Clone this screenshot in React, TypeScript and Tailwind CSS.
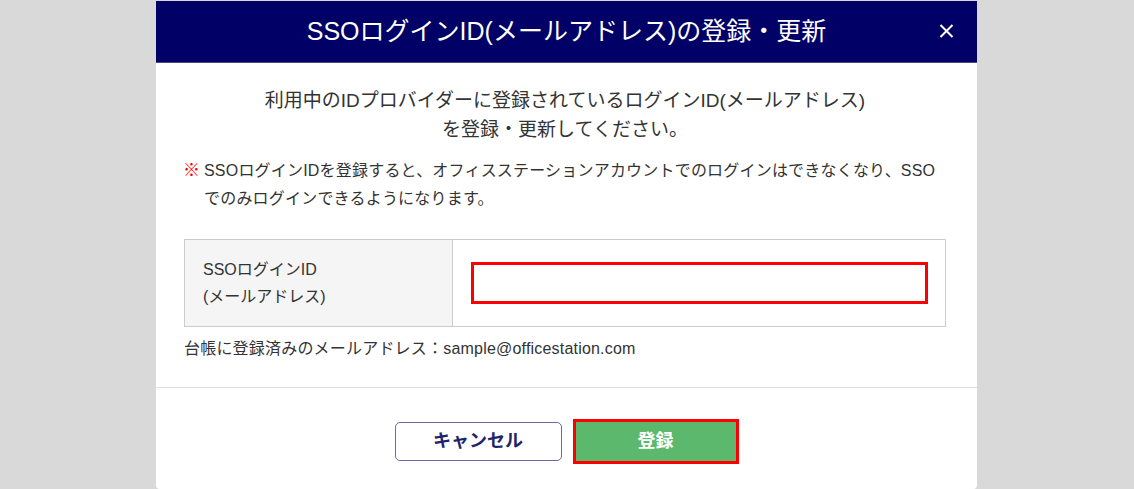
export default function App() {
  return (
    <div className="w-full h-[489px] bg-[#d9d9d9] pt-[1px] pl-[156px] flex overflow-hidden font-['Liberation_Sans','Noto_Sans_CJK_JP',sans-serif]">
      <div className="w-[821px] h-[488px] bg-white rounded-b-[4px] flex flex-col">
        {/* Header */}
        <div className="relative h-[62px] bg-[#000066] border-b border-[#4a4a8a] flex items-center justify-center">
          <h1 className="text-white text-[25px] leading-none">SSOログインID(メールアドレス)の登録・更新</h1>
          <button className="absolute right-[23px] top-[23px] text-white">
            <svg width="15" height="14" viewBox="0 0 15 14" fill="none" stroke="currentColor" strokeWidth="2">
              <path d="M1.5 1 L13.5 13 M13.5 1 L1.5 13" />
            </svg>
          </button>
        </div>

        {/* Body */}
        <div className="pl-[28px] pr-[31px] pt-[23px] pb-[26px] text-[#333]">
          <p className="text-center text-[19px] leading-[29px]">
            利用中のIDプロバイダーに登録されているログインID(メールアドレス)
            <br />
            を登録・更新してください。
          </p>

          <div className="mt-[13px] flex text-[16px] leading-[28px] tracking-[0.2px]">
            <span className="w-[21px] shrink-0 -ml-[1px] text-[#ff0000] text-[17px] font-bold">※</span>
            <p>
              SSOログインIDを登録すると、オフィスステーションアカウントでのログインはできなくなり、SSO
              <br />
              でのみログインできるようになります。
            </p>
          </div>

          <div className="mt-[26px] flex h-[88px] border border-[#cccccc]">
            <div className="w-[268px] shrink-0 bg-[#f5f5f5] border-r border-[#cccccc] pl-[18px] flex flex-col justify-center text-[16px] leading-[27px]">
              <span>SSOログインID</span>
              <span>(メールアドレス)</span>
            </div>
            <div className="flex-1 flex items-center pl-[18px] pr-[17px]">
              <input className="w-full h-[42px] border-[3px] border-[#ff0000] bg-white outline-none px-2 text-[16px]" />
            </div>
          </div>

          <p className="mt-[10px] text-[16px] leading-[24px] tracking-[0.2px]">台帳に登録済みのメールアドレス：sample@officestation.com</p>
        </div>

        {/* Footer */}
        <div className="border-t border-[#e0e0e0] pt-[31px] flex justify-center items-center gap-[11px]">
          <button className="w-[167px] h-[39px] border border-[#6a6aa6] rounded-[5px] bg-white text-[#23236a] text-[18px] font-bold">
            キャンセル
          </button>
          <button className="w-[166px] h-[45px] border-[3px] border-[#ff0000] bg-[#5cb86c] text-white text-[18px] font-bold">
            登録
          </button>
        </div>
      </div>
    </div>
  );
}
